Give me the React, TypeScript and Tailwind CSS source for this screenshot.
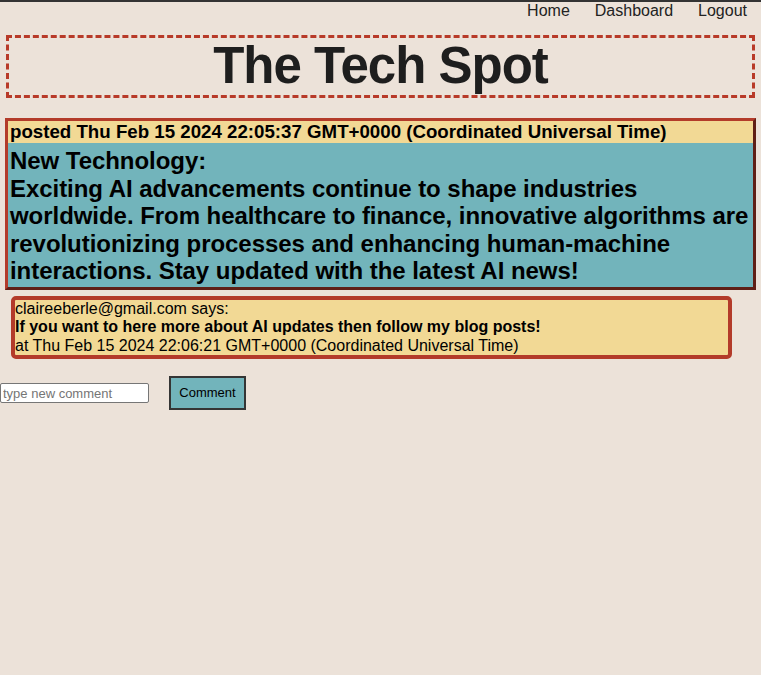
export default function App() {
  const font = { fontFamily: '"Liberation Sans", Arial, Helvetica, sans-serif' };

  return (
    <div className="min-h-screen bg-[#ece2d9] border-t-2 border-[#333333] text-black" style={font}>
      <nav className="flex justify-end gap-[25px] pr-[14px] text-[16px] leading-[18px] text-[#222222]">
        <a href="#">Home</a>
        <a href="#">Dashboard</a>
        <a href="#">Logout</a>
      </nav>

      <header className="mx-[6px] mt-[15px] border-[3px] border-dashed border-[#b83a29] pb-[1px]">
        <h1 className="text-center text-[51px] leading-[56px] font-bold tracking-[-1px] text-[#1e1e1e]">
          The Tech Spot
        </h1>
      </header>

      <main className="mt-[20px]">
        <div className="mx-[5px] border-[3px] [border-style:outset] border-[#b33b2a]">
          <div className="bg-[#f2d995] pl-[2px] text-[18.7px] leading-[22px] font-bold">
            posted Thu Feb 15 2024 22:05:37 GMT+0000 (Coordinated Universal Time)
          </div>
          <div className="bg-[#72b4bb] pl-[2px] pt-[4px] pb-[2px] text-[24px] leading-[27.6px] font-bold tracking-[-0.05px]">
            <div>New Technology:</div>
            <p>
              Exciting AI advancements continue to shape industries worldwide. From healthcare to finance, innovative
              algorithms are revolutionizing processes and enhancing human-machine interactions. Stay updated with the
              latest AI news!
            </p>
          </div>
        </div>

        <div className="ml-[11px] mt-[6px] w-[721px] rounded-[5px] border-4 border-[#b33b2a] bg-[#f2d995] text-[16px] leading-[18.4px]">
          <div>claireeberle@gmail.com says:</div>
          <div className="font-bold">If you want to here more about AI updates then follow my blog posts!</div>
          <div>at Thu Feb 15 2024 22:06:21 GMT+0000 (Coordinated Universal Time)</div>
        </div>

        <form className="mt-[17px] flex items-center gap-[20px]">
          <input
            type="text"
            placeholder="type new comment"
            className="h-[20px] w-[149px] rounded-[2px] border border-[#767676] bg-white px-[2px] text-[13px] placeholder:text-[#757575]"
            style={font}
          />
          <button
            type="button"
            className="h-[34px] w-[77px] border-2 border-[#353535] bg-[#72b4bb] text-[13px] text-black"
            style={font}
          >
            Comment
          </button>
        </form>
      </main>
    </div>
  );
}
